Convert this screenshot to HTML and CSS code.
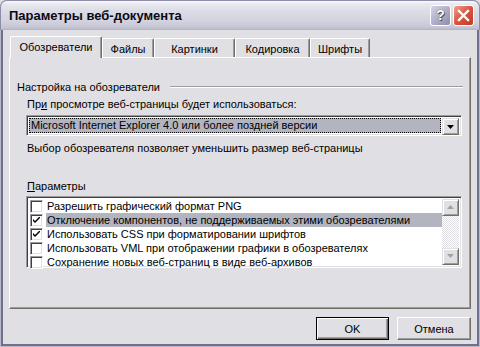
FILE: index.html
```html
<!DOCTYPE html>
<html lang="ru">
<head>
    <meta charset="UTF-8">
    <title>Параметры веб-документа</title>
    <link rel="stylesheet" href="styles.css">
</head>
<body>
    <div class="window">
        <!-- Title bar -->
        <div class="titlebar">
            <span class="title">Параметры веб-документа</span>
            <div class="tb-buttons">
                <span class="tb-btn help">?</span>
                <span class="tb-btn close">
                    <svg width="13" height="13" viewBox="0 0 13 13">
                        <path d="M2 2 L11 11 M11 2 L2 11" stroke="#fff" stroke-width="2.4" stroke-linecap="square"/>
                    </svg>
                </span>
            </div>
        </div>

        <div class="client">
            <!-- Tabs -->
            <div class="tabs">
                <div class="tab active" style="width: 92px">Обозреватели</div>
                <div class="tab" style="width: 52px">Файлы</div>
                <div class="tab" style="width: 81px">Картинки</div>
                <div class="tab" style="width: 75px">Кодировка</div>
                <div class="tab" style="width: 60px">Шрифты</div>
            </div>

            <div class="panel">
                <div class="group-title">
                    <span>Настройка на обозреватели</span>
                    <span class="etched"></span>
                </div>

                <div class="group">
                    <div class="label">Пр<u>и</u> просмотре веб-страницы будет использоваться:</div>
                    <div class="combo">
                        <span class="combo-value">Microsoft Internet Explorer 4.0 или более поздней версии</span>
                        <span class="combo-btn">
                            <svg width="7" height="4" viewBox="0 0 7 4"><path d="M0 0 H7 L3.5 4 Z" fill="#000"/></svg>
                        </span>
                    </div>
                    <div class="label hint">Выбор обозревателя позволяет уменьшить размер веб-страницы</div>

                    <div class="label params"><u>П</u>араметры</div>
                    <div class="listbox">
                        <div class="items">
                            <div class="item">
                                <span class="check"></span>
                                <span class="item-text">Разрешить графический формат PNG</span>
                            </div>
                            <div class="item selected">
                                <span class="check">
                                    <svg width="7" height="7" viewBox="0 0 7 7"><path d="M0 2 L0 4 L2 6 L7 1 L7 -1 L2 4 Z" fill="#000"/></svg>
                                </span>
                                <span class="item-text">Отключение компонентов, не поддерживаемых этими обозревателями</span>
                            </div>
                            <div class="item">
                                <span class="check">
                                    <svg width="7" height="7" viewBox="0 0 7 7"><path d="M0 2 L0 4 L2 6 L7 1 L7 -1 L2 4 Z" fill="#000"/></svg>
                                </span>
                                <span class="item-text">Использовать CSS при форматировании шрифтов</span>
                            </div>
                            <div class="item">
                                <span class="check"></span>
                                <span class="item-text">Использовать VML при отображении графики в обозревателях</span>
                            </div>
                            <div class="item">
                                <span class="check"></span>
                                <span class="item-text">Сохранение новых веб-страниц в виде веб-архивов</span>
                            </div>
                        </div>
                        <div class="scrollbar">
                            <span class="sb-btn">
                                <svg width="7" height="5" viewBox="0 0 7 5"><path d="M0 4 H7 L3.5 0 Z" fill="#a3a3a3"/></svg>
                            </span>
                            <span class="sb-track"></span>
                            <span class="sb-btn">
                                <svg width="7" height="5" viewBox="0 0 7 5"><path d="M0 0 H7 L3.5 4 Z" fill="#a3a3a3"/></svg>
                            </span>
                        </div>
                    </div>
                </div>
            </div>

            <!-- Dialog buttons -->
            <div class="actions">
                <button class="btn default">OK</button>
                <button class="btn">Отмена</button>
            </div>
        </div>
    </div>
</body>
</html>
```

FILE: styles.css
```css
:root {
    --face: #e0dfe3;
    --light: #ffffff;
    --shadow: #9d9da1;
    --dark: #716f64;
    --highlight: #b2b4bf;
    --frame: #6f6f90;
}

* {
    box-sizing: border-box;
}

body {
    margin: 0;
    background: var(--face);
    font-family: "Liberation Sans", Arial, sans-serif;
    font-size: 11px;
    color: #000;
}

.window {
    width: 480px;
    height: 347px;
    display: flex;
    flex-direction: column;
    background: var(--face);
    border-radius: 7px 7px 0 0;
    overflow: hidden;
    box-shadow: inset 0 0 0 1px #b9b9c9, inset 0 0 0 3px var(--frame);
}

/* Title bar */
.titlebar {
    height: 30px;
    flex: none;
    display: flex;
    align-items: center;
    padding: 0 5px 1px 8px;
    background: linear-gradient(#fbfbfd 0, #e8e8ef 3px, #dcdce6 10px, #d3d3df 20px, #c3c3d3 27px, #a7a7bd 30px);
    border-radius: 7px 7px 0 0;
    border: 1px solid #8d8da8;
    border-bottom: none;
}

.title {
    flex: 1;
    font-size: 13px;
    font-weight: bold;
    color: #0a0a14;
    padding-top: 1px;
}

.tb-buttons {
    display: flex;
    gap: 2px;
}

.tb-btn {
    width: 21px;
    height: 21px;
    border: 1px solid #fff;
    border-radius: 3px;
    display: flex;
    align-items: center;
    justify-content: center;
}

.help {
    background: linear-gradient(135deg, #d4d4e2, #a8a8c2 60%, #8e8eaa);
    color: #fff;
    font-weight: bold;
    font-size: 14px;
    text-shadow: 0 0 1px #333, 1px 1px 0 #555;
}

.close {
    background: linear-gradient(135deg, #f0a090, #d8543e 50%, #c03a24);
}

/* Client area */
.client {
    flex: 1;
    display: flex;
    flex-direction: column;
    padding: 6px 9px 0 9px;
}

.tabs {
    display: flex;
    align-items: flex-end;
    margin-left: 1px;
    height: 21px;
    position: relative;
    z-index: 1;
}

.tab {
    height: 19px;
    display: flex;
    align-items: center;
    justify-content: center;
    border-top: 1px solid var(--light);
    border-left: 1px solid var(--light);
    border-right: 1px solid var(--dark);
    box-shadow: inset -1px 0 var(--shadow);
    border-radius: 2px 2px 0 0;
    background: var(--face);
    padding-top: 1px;
}

.tab.active {
    height: 22px;
    margin-bottom: -1px;
    padding-bottom: 2px;
}

.panel {
    height: 252px;
    border-top: 1px solid var(--light);
    border-left: 1px solid var(--light);
    border-right: 1px solid var(--dark);
    border-bottom: 1px solid var(--dark);
    box-shadow: inset -1px -1px var(--shadow);
    padding: 0 8px 0 7px;
}

.group-title {
    display: flex;
    align-items: center;
    gap: 10px;
    margin-top: 22px;
    height: 13px;
}

.etched {
    flex: 1;
    height: 2px;
    border-top: 1px solid var(--shadow);
    border-bottom: 1px solid var(--light);
    margin-right: -1px;
}

.group {
    margin-left: 9px;
}

.label {
    height: 13px;
    line-height: 13px;
    margin-top: 5px;
    padding-left: 1px;
}

.label.hint {
    margin-top: 6px;
}

.label.params {
    margin-top: 25px;
}

/* Sunken fields */
.combo,
.listbox,
.check {
    background: var(--light);
    border: 1px solid;
    border-color: var(--shadow) var(--light) var(--light) var(--shadow);
    box-shadow: inset 1px 1px #404040, inset -1px -1px var(--face);
}

/* Raised arrow buttons */
.combo-btn,
.sb-btn {
    width: 17px;
    height: 17px;
    display: flex;
    align-items: center;
    justify-content: center;
    background: var(--face);
    border: 1px solid;
    border-color: var(--face) var(--dark) var(--dark) var(--face);
    box-shadow: inset 1px 1px var(--light), inset -1px -1px var(--shadow);
}

.combo {
    margin-top: 4px;
    height: 21px;
    display: flex;
    padding: 2px;
}

.combo-value {
    flex: 1;
    background: var(--highlight);
    outline: 1px dotted #000;
    outline-offset: -1px;
    padding-left: 2px;
    line-height: 15px;
    margin-right: 1px;
}

/* List box */
.listbox {
    margin-top: 3px;
    height: 72px;
    display: flex;
    padding: 2px;
}

.items {
    flex: 1;
}

.item {
    height: 14px;
    display: flex;
    align-items: center;
}

.check {
    width: 13px;
    height: 13px;
    margin: 0 3px 0 1px;
    flex: none;
    display: flex;
    align-items: center;
    justify-content: center;
}

.item-text {
    flex: 1;
    height: 14px;
    line-height: 14px;
    padding-left: 1px;
}

.item.selected .item-text {
    background: var(--highlight);
}

.scrollbar {
    width: 17px;
    display: flex;
    flex-direction: column;
}

.sb-track {
    flex: 1;
    background-image: repeating-conic-gradient(#ffffff 0 25%, var(--face) 0 50%);
    background-size: 2px 2px;
}

/* Buttons */
.actions {
    display: flex;
    justify-content: flex-end;
    gap: 8px;
    margin-top: 8px;
}

.btn {
    width: 74px;
    height: 23px;
    font-family: "Liberation Sans", Arial, sans-serif;
    font-size: 11px;
    color: #000;
    background: var(--face);
    border: 1px solid;
    border-color: var(--light) var(--dark) var(--dark) var(--light);
    box-shadow: inset -1px -1px var(--shadow);
    padding: 0;
}

.btn.default {
    width: 73px;
    border: 1px solid #000;
    box-shadow: inset 1px 1px var(--light), inset -1px -1px var(--dark), inset -2px -2px var(--shadow);
}
```
